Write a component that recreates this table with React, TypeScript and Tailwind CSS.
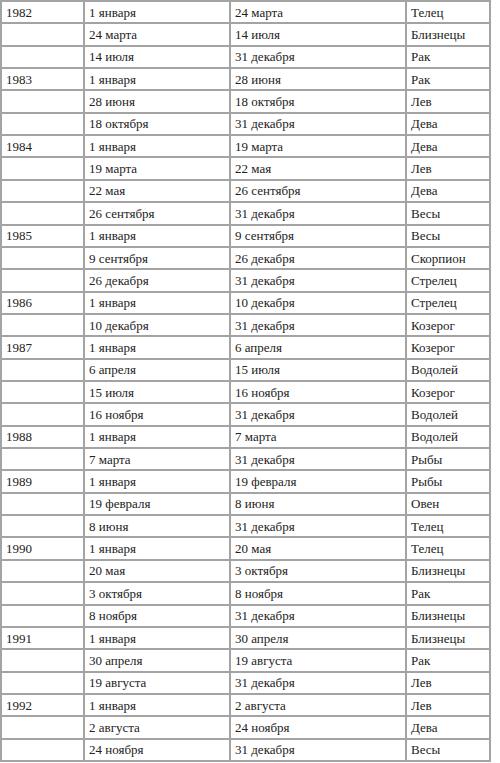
const data: [string, [string, string, string][]][] = [
  ["1982", [["1 января", "24 марта", "Телец"], ["24 марта", "14 июля", "Близнецы"], ["14 июля", "31 декабря", "Рак"]]],
  ["1983", [["1 января", "28 июня", "Рак"], ["28 июня", "18 октября", "Лев"], ["18 октября", "31 декабря", "Дева"]]],
  ["1984", [["1 января", "19 марта", "Дева"], ["19 марта", "22 мая", "Лев"], ["22 мая", "26 сентября", "Дева"], ["26 сентября", "31 декабря", "Весы"]]],
  ["1985", [["1 января", "9 сентября", "Весы"], ["9 сентября", "26 декабря", "Скорпион"], ["26 декабря", "31 декабря", "Стрелец"]]],
  ["1986", [["1 января", "10 декабря", "Стрелец"], ["10 декабря", "31 декабря", "Козерог"]]],
  ["1987", [["1 января", "6 апреля", "Козерог"], ["6 апреля", "15 июля", "Водолей"], ["15 июля", "16 ноября", "Козерог"], ["16 ноября", "31 декабря", "Водолей"]]],
  ["1988", [["1 января", "7 марта", "Водолей"], ["7 марта", "31 декабря", "Рыбы"]]],
  ["1989", [["1 января", "19 февраля", "Рыбы"], ["19 февраля", "8 июня", "Овен"], ["8 июня", "31 декабря", "Телец"]]],
  ["1990", [["1 января", "20 мая", "Телец"], ["20 мая", "3 октября", "Близнецы"], ["3 октября", "8 ноября", "Рак"], ["8 ноября", "31 декабря", "Близнецы"]]],
  ["1991", [["1 января", "30 апреля", "Близнецы"], ["30 апреля", "19 августа", "Рак"], ["19 августа", "31 декабря", "Лев"]]],
  ["1992", [["1 января", "2 августа", "Лев"], ["2 августа", "24 ноября", "Дева"], ["24 ноября", "31 декабря", "Весы"]]],
];

function Cell({ children }: { children?: string }) {
  return (
    <div className="bg-white flex items-center pl-[4px] font-['Liberation_Serif','Times_New_Roman',serif] text-[13px] leading-none text-[#222] whitespace-nowrap">
      {children}
    </div>
  );
}

export default function App() {
  const rows: string[][] = [];
  data.forEach(([year, periods]) => {
    periods.forEach((p, i) => rows.push([i === 0 ? year : "", ...p]));
  });

  return (
    <div className="w-[500px] h-[763px] bg-white">
      <div className="w-[491px] h-[762px] grid grid-cols-[81px_144px_174px_82px] grid-rows-[repeat(34,minmax(0,1fr))] gap-[2px] p-[2px] bg-[#a3a3a3]">
        {rows.map((r, i) =>
          r.map((c, j) => <Cell key={i + "-" + j}>{c}</Cell>)
        )}
      </div>
    </div>
  );
}
